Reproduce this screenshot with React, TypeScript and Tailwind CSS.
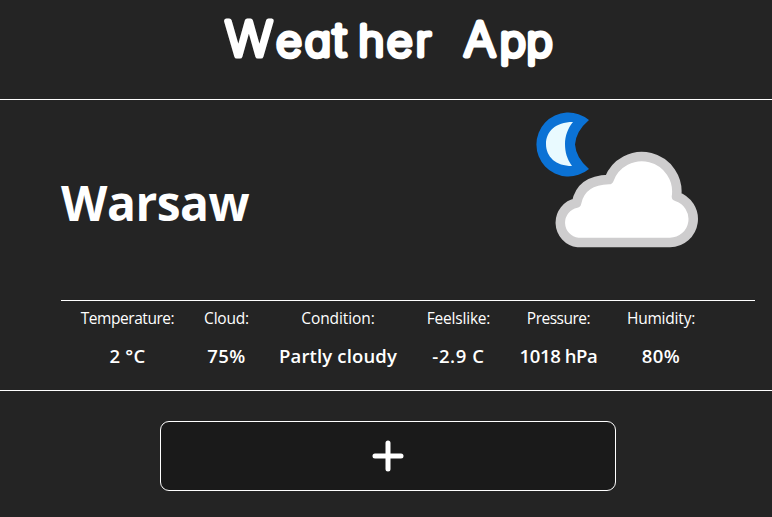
const stats = [
  { label: "Temperature:", value: "2 °C", width: "w-[93px]", ls: "tracking-[-0.45px]", vs: "tracking-[0.3px]" },
  { label: "Cloud:", value: "75%", width: "w-[45px]", ls: "tracking-[-0.2px]", vs: "tracking-[0.4px]" },
  { label: "Condition:", value: "Partly cloudy", width: "w-[118px]", ls: "tracking-[-0.1px]", vs: "tracking-[0.15px]" },
  { label: "Feelslike:", value: "-2.9 C", width: "w-[63px]", ls: "tracking-[-0.2px]", vs: "tracking-[0.6px]" },
  { label: "Pressure:", value: "1018 hPa", width: "w-[77px]", ls: "tracking-[-0.5px]", vs: "tracking-[-0.4px]" },
  { label: "Humidity:", value: "80%", width: "w-[68px]", ls: "tracking-[-0.2px]", vs: "tracking-[0.4px]" },
];

function Title() {
  return (
    <h1 className="h-[99px]">
      <svg width="772" height="99" viewBox="0 0 772 99" className="block font-['Inter',sans-serif] [font-feature-settings:'cv11']" fill="#fff" stroke="#fff" strokeWidth="5" strokeLinejoin="round" strokeLinecap="round">
        <g transform="scale(1.05 1)" fontWeight="200">
          <text y="56" fontSize="47.5"><tspan x="214.5">W</tspan><tspan fontSize="42" x="263 290.5">ea</tspan><tspan fontSize="46" x="317.5">t</tspan><tspan fontSize="42" x="341.5 368.5 396">her</tspan></text>
          <text y="56" fontSize="46"><tspan x="442">A</tspan><tspan fontSize="42" x="476 501.500">pp</tspan></text>
        </g>
      </svg>
    </h1>
  );
}

function NightCloud() {
  return (
    <svg width="190" height="160" viewBox="0 0 190 160" aria-label="Partly cloudy" className="blur-[0.6px]">
      <path d="M69 20A32 32 0 1 0 69 69Q56 58 55 44.500Q56 31 69 20Z" fill="#0b72d5" />
      <path d="M53 22C35 22 26 32 26 44C26 57 36 66 52 66C47 59 45 52 45 44C45 36 48 28 53 22Z" fill="#e9faff" />
      <path d="M58 142.500A20 20 0 0 1 56.500 103Q61 80 89 79.500A35 35 0 0 1 156.500 96.500A23.500 23.500 0 0 1 150 142.500Z" fill="#fff" stroke="#cecdce" strokeWidth="9.500" strokeLinejoin="round" />
    </svg>
  );
}

export default function App() {
  return (
    <div className="h-[517px] w-[772px] overflow-hidden bg-[#242424] font-['Open_Sans','Noto_Sans',sans-serif] text-white">
      <Title />
      <section className="h-[292px] border-y border-white pl-[61px] pr-[17px]">
        <div className="flex h-[200px] items-start justify-between pr-[45px]">
          <h2 className="pt-[69px] text-[48px] font-bold leading-[68px]"><span className="tracking-[-0.5px]">Warsaw</span></h2>
          <NightCloud />
        </div>
        <div className="flex h-[90px] gap-[30px] border-t border-white pl-5">
          {stats.map((s) => (
            <div key={s.label} className={`flex shrink-0 flex-col items-center whitespace-nowrap ${s.width}`}>
              <span className={`mt-[5px] text-[15.5px] leading-6 ${s.ls}`}>{s.label}</span>
              <span className={`mt-[12px] text-[18.5px] font-semibold leading-7 ${s.vs}`}>{s.value}</span>
            </div>
          ))}
        </div>
      </section>
      <div className="flex pl-[160px] pt-[30px]">
        <button className="flex h-[70px] w-[456px] items-center justify-center rounded-[9px] border border-white bg-[#1a1a1a]" aria-label="Add">
          <svg width="32" height="32" viewBox="0 0 32 32" stroke="#fff" strokeWidth="5" strokeLinecap="round">
            <path d="M16 3v26M3 16h26" />
          </svg>
        </button>
      </div>
    </div>
  );
}
